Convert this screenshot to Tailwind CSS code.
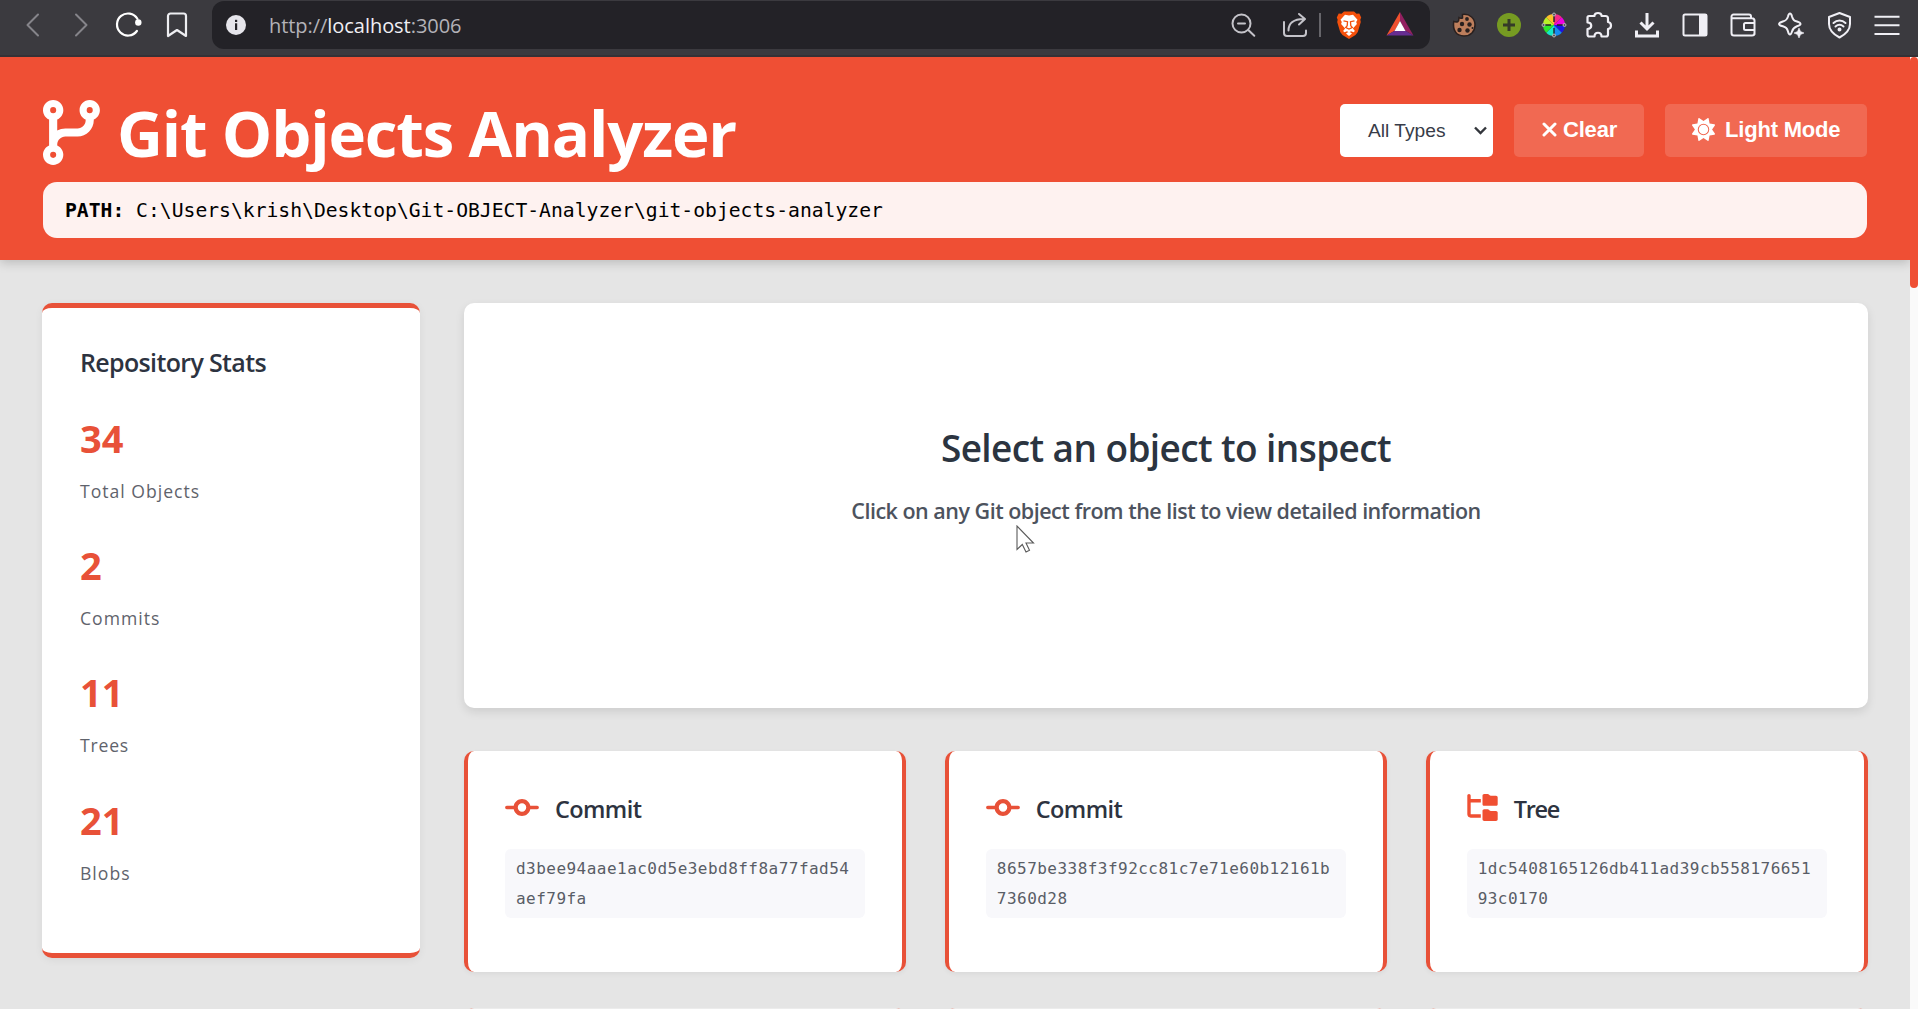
<!DOCTYPE html>
<html lang="en">
<head>
<meta charset="utf-8">
<title>Git Objects Analyzer</title>
<script src="https://cdn.jsdelivr.net/npm/@tailwindcss/browser@4"></script>
</head>
<body class="w-[1918px] h-[1009px] overflow-hidden flex flex-col bg-[#e5e5e5] font-['Open_Sans','Noto_Sans',sans-serif] text-[#2d3340]">

<!-- Shared icon shapes -->
<svg class="hidden">
  <symbol id="commit" viewBox="0 0 640 512"><path fill="#e85138" d="M320 336a80 80 0 1 0 0-160 80 80 0 1 0 0 160zm156.800-48C462 361 397.400 416 320 416s-142-55-156.800-128H32c-17.700 0-32-14.300-32-32s14.300-32 32-32H163.200C178 151 242.600 96 320 96s142 55 156.800 128H608c17.700 0 32 14.300 32 32s-14.300 32-32 32H476.800z"/></symbol>
  <symbol id="tree" viewBox="0 0 576 512"><path fill="#f04f32" d="M64 32C64 14.300 49.700 0 32 0S0 14.300 0 32v96V384c0 35.300 28.700 64 64 64H256V384H64V160H256V96H64V32zM288 192c0 17.700 14.300 32 32 32H544c17.700 0 32-14.300 32-32V64c0-17.700-14.300-32-32-32H445.300c-8.500 0-16.600-3.400-22.600-9.400L409.400 9.400c-6-6-14.100-9.400-22.600-9.400H320c-17.700 0-32 14.300-32 32V192zm0 288c0 17.700 14.300 32 32 32H544c17.700 0 32-14.300 32-32V352c0-17.700-14.300-32-32-32H445.300c-8.500 0-16.600-3.400-22.600-9.400l-13.300-13.300c-6-6-14.100-9.400-22.600-9.400H320c-17.700 0-32 14.300-32 32V480z"/></symbol>
</svg>

<!-- Browser toolbar -->
<div class="h-[57px] shrink-0 bg-[#3b3a3f] border-b-2 border-[#353136] flex items-start">
  <div class="flex gap-5 pl-[19px] mt-[11px] w-[212px] shrink-0">
    <svg class="size-7" viewBox="0 0 28 28" fill="none" stroke="#85848a" stroke-width="2" stroke-linecap="round" stroke-linejoin="round"><path d="M19 3.500L8.500 14L19 24.500"/></svg>
    <svg class="size-7" viewBox="0 0 28 28" fill="none" stroke="#85848a" stroke-width="2" stroke-linecap="round" stroke-linejoin="round"><path d="M9 3.500L19.500 14L9 24.500"/></svg>
    <svg class="size-7" viewBox="0 0 28 28" fill="none" stroke="#fff" stroke-width="2.200" stroke-linecap="round"><path d="M22.400 7.800A11 11 0 1 0 21.900 20"/><circle cx="23.300" cy="11.500" r="3.200" fill="#fff" stroke="none"/></svg>
    <svg class="size-7" viewBox="0 0 28 28" fill="none" stroke="#eeeef2" stroke-width="2.200" stroke-linejoin="round"><path d="M7.500 2.500h13a2.500 2.500 0 0 1 2.500 2.500v20l-9-6-9 6V5a2.500 2.500 0 0 1 2.500-2.500z"/></svg>
  </div>
  <div class="w-[1218px] h-12 mt-px shrink-0 rounded-xl bg-[#232227] flex items-center">
    <svg class="size-5 ml-[14px]" viewBox="0 0 20 20"><circle cx="10" cy="10" r="10" fill="#e6e5eb"/><rect x="9" y="8.300" width="2.200" height="6.700" fill="#232227"/><rect x="9" y="4.800" width="2.200" height="2.200" fill="#232227"/></svg>
    <div class="ml-[23px] pt-px text-xl leading-6 tracking-[-0.050px] text-[#b3b2b8] whitespace-nowrap">http://<span class="text-[#f0eff4]">localhost</span>:3006</div>
    <div class="flex-1"></div>
    <svg class="size-7 mr-6" viewBox="0 0 28 28" fill="none" stroke="#c4c3c9" stroke-width="2" stroke-linecap="round"><circle cx="12.500" cy="12.500" r="9"/><path d="M9 12.500h7M19.300 19l6 5.800"/></svg>
    <svg class="size-7 mr-[10px]" viewBox="0 0 28 28" fill="none" stroke="#c4c3c9" stroke-width="2" stroke-linecap="round" stroke-linejoin="round"><path d="M3 11v11a3 3 0 0 0 3 3h16a3 3 0 0 0 3-3v-2.500M7.500 19.500c0-7 5-11.500 15-11.500M18 3l6 5-6 5.500"/></svg>
    <div class="w-0.5 h-6 bg-[#66656a] mr-[14px]"></div>
    <svg class="size-7 mr-[23px]" viewBox="0 0 28 28"><path fill="#f4500b" d="M9 .5h10l2.500 2.300 2.800-.2 1.900 3.800-.9 2.300.5 2.300-3 10-2.300 3L14 28l-6.500-4-2.300-3-3-10 .5-2.300-.9-2.300 1.900-3.800 2.800.2z"/><path fill="#fff" d="M14 4.500l4-.8 4.500 5-1.300 2.300.7 2-4 4.500 2 2.600-1.400 1.200-2.500-1-2 1.200-2-1.200-2.500 1-1.400-1.200 2-2.600-4-4.500.7-2L5.500 8.700l4.500-5zM14 20.500l3 2-3 2.500-3-2.500z"/><path d="M8.500 9.800l4 .9-.3 4-1.500 1.800 3.300 1.500 3.300-1.500-1.500-1.800-.3-4 4-.9" fill="none" stroke="#f4500b" stroke-width="1.300"/></svg>
    <svg class="size-7 mr-[16px]" viewBox="0 0 28 28"><path d="M14 1L.5 24.500 9 19.500 14 10z" fill="#f0502f"/><path d="M14 1l13.500 23.500-8.500-5L14 10z" fill="#922060"/><path d="M.5 24.500h27l-8.500-5H9z" fill="#662d91"/><path d="M14 10l5.500 10h-11z" fill="#fff"/></svg>
  </div>
  <div class="flex gap-[17px] ml-5 mt-[11px]">
    <svg class="size-7" viewBox="0 0 28 28"><path d="M12.500 3.500c-.3 1.500.3 2 0 3.500-1.500.5-2.500.3-3.500-.5-.5 1.500.3 3-1 4-1.500.8-2.800.5-4.300 0C2.500 19 6 25 14 25c6.500 0 11-4.500 11-11S20 2.500 12.500 3.500z" fill="#bd7e5c" stroke="#29201f" stroke-width="1.500"/><g fill="#29201f"><circle cx="17" cy="8" r="1.900"/><circle cx="12" cy="13" r="2.200"/><circle cx="19.500" cy="13.500" r="2.200"/><circle cx="9.500" cy="19" r="2.200"/><circle cx="17.500" cy="19.500" r="2.200"/><circle cx="22.500" cy="17" r="1"/></g></svg>
    <svg class="size-7" viewBox="0 0 28 28"><circle cx="14" cy="14" r="12" fill="#769b22"/><path d="M14 8v12M8 14h12" stroke="#353b28" stroke-width="3"/></svg>
    <svg class="size-7" viewBox="0 0 28 28"><path d="M14 14V3a11 11 0 0 1 7.800 3.200z" fill="#f52a86"/><path d="M14 14l7.800-7.800A11 11 0 0 1 25 14z" fill="#f000e0"/><path d="M14 14h11a11 11 0 0 1-3.200 7.800z" fill="#1c13e6"/><path d="M14 14l7.800 7.800A11 11 0 0 1 14 25z" fill="#168cf0"/><path d="M14 14v11a11 11 0 0 1-7.800-3.200z" fill="#16e8c8"/><path d="M14 14l-7.800 7.800A11 11 0 0 1 3 14z" fill="#2be62a"/><path d="M14 14H3a11 11 0 0 1 3.200-7.800z" fill="#b8f02a"/><path d="M14 14L6.200 6.200A11 11 0 0 1 14 3z" fill="#ffc02a"/><path d="M14 4v7M14 17v7M4 14h7M17 14h7" stroke="#222" stroke-width="1.400"/><g fill="#55545a" stroke="#ccc" stroke-width=".8"><circle cx="14" cy="3.500" r="1.500"/><circle cx="14" cy="24.500" r="1.500"/><circle cx="3.500" cy="14" r="1.500"/><circle cx="24.500" cy="14" r="1.500"/></g></svg>
  </div>
  <div class="flex gap-5 ml-[17px] mt-[11px]">
    <svg class="size-7" viewBox="0 0 28 28" fill="none" stroke="#f0eff5" stroke-width="2.200" stroke-linejoin="round"><path d="M4 5H9.500c-.5-4 7.500-4 7 0h4a2.500 2.500 0 0 1 2.500 2.500V11c4 .5 4 6.500 0 7v5.500a2 2 0 0 1-2 2H16.500c0-5-7-5-7 0H4.500a2 2 0 0 1-2-2V18c5 0 5-6.500 0-6.500V6.500A1.500 1.500 0 0 1 4 5z"/></svg>
    <svg class="size-7" viewBox="0 0 28 28" fill="none" stroke="#f0eff5" stroke-width="3"><path d="M14 2v15M7.500 11.500L14 18l6.500-6.500M3.500 19.500v5.500h21v-5.500"/></svg>
    <svg class="size-7" viewBox="0 0 28 28"><rect x="2.500" y="3.500" width="23" height="21" rx="1.500" fill="none" stroke="#f0eff5" stroke-width="2"/><rect x="18" y="3" width="8" height="22" fill="#f0eff5"/></svg>
    <svg class="size-7" viewBox="0 0 28 28" fill="none" stroke="#f0eff5" stroke-width="2" stroke-linejoin="round"><path d="M25.500 12v10a2.500 2.500 0 0 1-2.500 2.500H5A2.500 2.500 0 0 1 2.500 22V5.500A2 2 0 0 1 4.500 3.500H20a2 2 0 0 1 2 2v1.700M3 7.300h20a2.500 2.500 0 0 1 2.500 2.500v14"/><path d="M25.500 12h-9a1.500 1.500 0 0 0-1.500 1.500v4a1.500 1.500 0 0 0 1.500 1.500h9"/></svg>
    <svg class="size-7" viewBox="0 0 28 28"><path d="M13 2.500c1 0 1.500 1 2 3 1 3.500 2 4 5 5s3.500 1.300 3.500 2.500-1 1.600-3.500 2.300c-3 1-4 2-5 5.200-.6 2-1 3-2 3s-1.500-1-2-3c-1-3.500-2-4.200-5.200-5.200C3 14.600 2 14.200 2 13s1-1.600 3.800-2.500c3.200-1 4.200-1.700 5.200-5 .5-2 1-3 2-3z" fill="none" stroke="#f0eff5" stroke-width="2"/><path d="M22 17l1.500 3.500L27 22l-3.500 1.500L22 27l-1.500-3.500L17 22l3.500-1.500z" fill="#f0eff5" stroke="#f0eff5" stroke-width=".6"/></svg>
    <svg class="size-7" viewBox="0 0 28 28" fill="none" stroke="#f0eff5" stroke-width="2" stroke-linecap="round" stroke-linejoin="round"><path d="M14.500 2l10.500 4v7c0 6-4 10-10.500 13.500C8 23 4 19 4 13V6z"/><path d="M8.500 12c3.500-3.300 8.500-3.300 12 0M10.500 15.500c2.500-2.200 5.500-2.200 8 0"/><circle cx="14.500" cy="18.500" r="1" fill="#f0eff5"/></svg>
    <svg class="size-7" viewBox="0 0 28 28" stroke="#f0eff5" stroke-width="2"><path d="M1.500 5.700h25M1.500 14.300h25M1.500 23h25"/></svg>
  </div>
</div>

<div class="flex flex-1 min-h-0">
  <div class="flex-1 flex flex-col min-w-0 overflow-hidden">
    <!-- App header -->
    <header class="h-[203px] shrink-0 bg-[#ef4f34] px-[43px] pt-[35px] shadow-[0_3px_10px_rgba(0,0,0,0.18)]">
      <div class="flex items-start h-[90px]">
        <svg class="w-[58px] h-[65px] mt-2 shrink-0" viewBox="0 0 448 512" preserveAspectRatio="xMinYMid meet"><path fill="#fff" d="M80 104a24 24 0 1 0 0-48 24 24 0 1 0 0 48zm80-24c0 32.800-19.700 61-48 73.300v87.800c18.800-10.900 40.700-17.100 64-17.100h96c35.300 0 64-28.700 64-64v-6.700C307.700 141 288 112.800 288 80c0-44.200 35.800-80 80-80s80 35.800 80 80c0 32.800-19.700 61-48 73.300V160c0 70.700-57.300 128-128 128H176c-35.300 0-64 28.700-64 64v6.700c28.300 12.300 48 40.500 48 73.300c0 44.200-35.800 80-80 80s-80-35.800-80-80c0-32.800 19.700-61 48-73.300V352 153.300C19.700 141 0 112.800 0 80C0 35.800 35.800 0 80 0s80 35.800 80 80zm232 0a24 24 0 1 0 -48 0 24 24 0 1 0 48 0zM80 456a24 24 0 1 0 0-48 24 24 0 1 0 0 48z"/></svg>
        <h1 class="ml-4 mt-px flex-1 text-[63.500px] leading-[80px] font-bold text-white tracking-[-1.150px] whitespace-nowrap">Git Objects Analyzer</h1>
        <div class="flex gap-[21px] mt-3 font-['Liberation_Sans',Arial,sans-serif]">
          <div class="w-[153px] h-[53px] rounded-[5px] bg-white flex items-center justify-between pl-7 pr-[6px] text-[19.200px] text-[#373c48]"><span class="pt-px">All Types</span>
            <svg class="w-[13px] h-[9px]" viewBox="0 0 13 9" fill="none" stroke="#33363c" stroke-width="2.400"><path d="M1 1.500l5.500 5.500L12 1.500"/></svg>
          </div>
          <div class="w-[130px] h-[53px] rounded-[5px] bg-white/15 flex items-center pl-[28px] pb-0.5 text-[22px] font-bold text-white">
            <svg class="size-[15px] mr-[6px]" viewBox="0 0 15 15" stroke="#fff" stroke-width="3" stroke-linecap="round"><path d="M2 2l11 11M13 2L2 13"/></svg><span class="tracking-[-0.200px]">Clear</span>
          </div>
          <div class="w-[202px] h-[53px] rounded-[5px] bg-white/15 flex items-center pl-[27px] pb-0.5 text-[22px] font-bold text-white whitespace-nowrap">
            <svg class="size-[23px] mr-[10px]" viewBox="0 0 512 512"><path fill="#fff" d="M361.500 1.200c5 2.100 8.600 6.600 9.600 11.900L391 121l107.900 19.800c5.300 1 9.800 4.600 11.900 9.600s1.500 10.700-1.600 15.200L446.900 256l62.300 90.300c3.100 4.500 3.700 10.200 1.600 15.200s-6.600 8.600-11.900 9.600L391 391 371.100 498.900c-1 5.300-4.600 9.800-9.600 11.900s-10.700 1.500-15.200-1.600L256 446.900l-90.300 62.300c-4.500 3.100-10.200 3.700-15.200 1.600s-8.600-6.600-9.600-11.900L121 391 13.100 371.100c-5.300-1-9.800-4.600-11.900-9.600s-1.500-10.700 1.600-15.200L65.100 256 2.800 165.700c-3.100-4.500-3.700-10.200-1.600-15.200s6.600-8.600 11.900-9.600L121 121 140.900 13.100c1-5.300 4.600-9.800 9.600-11.900s10.700-1.500 15.200 1.600L256 65.100 346.300 2.800c4.500-3.100 10.200-3.700 15.200-1.600zM160 256a96 96 0 1 1 192 0 96 96 0 1 1 -192 0zm224 0a128 128 0 1 0 -256 0 128 128 0 1 0 256 0z"/><circle cx="256" cy="256" r="104" fill="#fff"/></svg><span class="tracking-[-0.200px]">Light Mode</span>
          </div>
        </div>
      </div>
      <div class="h-14 rounded-[14px] bg-[#fef2f0] px-[22px] pt-px flex items-center font-['DejaVu_Sans_Mono',monospace] text-[19.700px] text-black whitespace-pre"><span class="font-bold">PATH:</span> C:\Users\krish\Desktop\Git-OBJECT-Analyzer\git-objects-analyzer</div>
    </header>

    <div class="flex items-start pl-[42px] pr-[42px] pt-[43px] gap-11">
      <!-- Repository stats -->
      <aside class="w-[378px] h-[655px] shrink-0 rounded-[10px] border-y-5 border-[#e85138] bg-white pl-[38px] pt-9 shadow-[0_2px_8px_rgba(0,0,0,0.06)]">
        <h2 class="text-[25px] leading-9 font-semibold tracking-[-0.650px] mb-[31.500px]">Repository Stats</h2>
        <div class="flex flex-col gap-[34.400px]">
          <div class="flex flex-col gap-[13px]"><div class="text-[38px] leading-[52px] font-bold text-[#e85138]">34</div><div class="text-[17.600px] leading-7 tracking-[1px] text-[#5f636c]">Total Objects</div></div>
          <div class="flex flex-col gap-[13px]"><div class="text-[38px] leading-[52px] font-bold text-[#e85138]">2</div><div class="text-[17.600px] leading-7 tracking-[1px] text-[#5f636c]">Commits</div></div>
          <div class="flex flex-col gap-[13px]"><div class="text-[38px] leading-[52px] font-bold text-[#e85138]">11</div><div class="text-[17.600px] leading-7 tracking-[0.800px] text-[#5f636c]">Trees</div></div>
          <div class="flex flex-col gap-[13px]"><div class="text-[38px] leading-[52px] font-bold text-[#e85138]">21</div><div class="text-[17.600px] leading-7 tracking-[1px] text-[#5f636c]">Blobs</div></div>
        </div>
      </aside>

      <main class="flex-1 min-w-0">
        <!-- Inspector -->
        <section class="relative h-[405px] rounded-[10px] bg-white pt-[120px] text-center shadow-[0_4px_10px_rgba(0,0,0,0.1)]">
          <h2 class="text-[37px] leading-[50px] font-semibold tracking-[-0.600px] text-[#2b3440]">Select an object to inspect</h2>
          <p class="mt-[22px] text-[21.500px] leading-8 font-semibold tracking-[-0.500px] text-[#4d535e]">Click on any Git object from the list to view detailed information</p>
          <svg class="absolute left-[552px] top-[222px] w-5 h-7" viewBox="0 0 20 28"><path d="M1 1v23.500l5.300-5 3.700 7.500 3.500-1.700-3.500-7.300h7.500z" fill="#fff" stroke="#5a5a5a" stroke-width="1.100"/></svg>
        </section>

        <!-- Object list -->
        <section class="mt-[43px] grid grid-cols-3 gap-x-[38.500px] gap-y-9">
          <article class="h-[221px] rounded-[10px] border-x-4 border-[#e85138] bg-white px-[37px] pt-10 shadow-[0_2px_5px_rgba(0,0,0,0.05)]">
            <div class="flex items-center gap-4 h-9"><svg class="w-[34px] h-[27px] mb-[3px]"><use href="#commit"/></svg><h3 class="text-[23.500px] leading-9 font-semibold tracking-[-0.600px]">Commit</h3></div>
            <div class="mt-[22px] h-[69px] rounded-md bg-[#f8f8fb] px-[11px] pt-[5px] font-['DejaVu_Sans_Mono',monospace] text-base leading-[30px] tracking-[0.470px] break-all text-[#595d66]">d3bee94aae1ac0d5e3ebd8ff8a77fad54aef79fa</div>
          </article>
          <article class="h-[221px] rounded-[10px] border-x-4 border-[#e85138] bg-white px-[37px] pt-10 shadow-[0_2px_5px_rgba(0,0,0,0.05)]">
            <div class="flex items-center gap-4 h-9"><svg class="w-[34px] h-[27px] mb-[3px]"><use href="#commit"/></svg><h3 class="text-[23.500px] leading-9 font-semibold tracking-[-0.600px]">Commit</h3></div>
            <div class="mt-[22px] h-[69px] rounded-md bg-[#f8f8fb] px-[11px] pt-[5px] font-['DejaVu_Sans_Mono',monospace] text-base leading-[30px] tracking-[0.470px] break-all text-[#595d66]">8657be338f3f92cc81c7e71e60b12161b7360d28</div>
          </article>
          <article class="h-[221px] rounded-[10px] border-x-4 border-[#e85138] bg-white px-[37px] pt-10 shadow-[0_2px_5px_rgba(0,0,0,0.05)]">
            <div class="flex items-center gap-4 h-9"><svg class="w-[31px] h-[27px] mb-[3px]"><use href="#tree"/></svg><h3 class="text-[23.500px] leading-9 font-semibold tracking-[-1.300px]">Tree</h3></div>
            <div class="mt-[22px] h-[69px] rounded-md bg-[#f8f8fb] px-[11px] pt-[5px] font-['DejaVu_Sans_Mono',monospace] text-base leading-[30px] tracking-[0.470px] break-all text-[#595d66]">1dc5408165126db411ad39cb55817665193c0170</div>
          </article>
          <article class="h-10 rounded-[10px] border-x-4 border-[#e85138]/40 bg-[#ececec]"></article>
          <article class="h-10 rounded-[10px] border-x-4 border-[#e85138]/40 bg-[#ececec]"></article>
          <article class="h-10 rounded-[10px] border-x-4 border-[#e85138]/40 bg-[#ececec]"></article>
        </section>
      </main>
    </div>
  </div>
  <!-- Scrollbar -->
  <div class="w-2 shrink-0 bg-[#fafafa]"><div class="h-[231px] rounded bg-[#ef4f34]"></div></div>
</div>
</body>
</html>
